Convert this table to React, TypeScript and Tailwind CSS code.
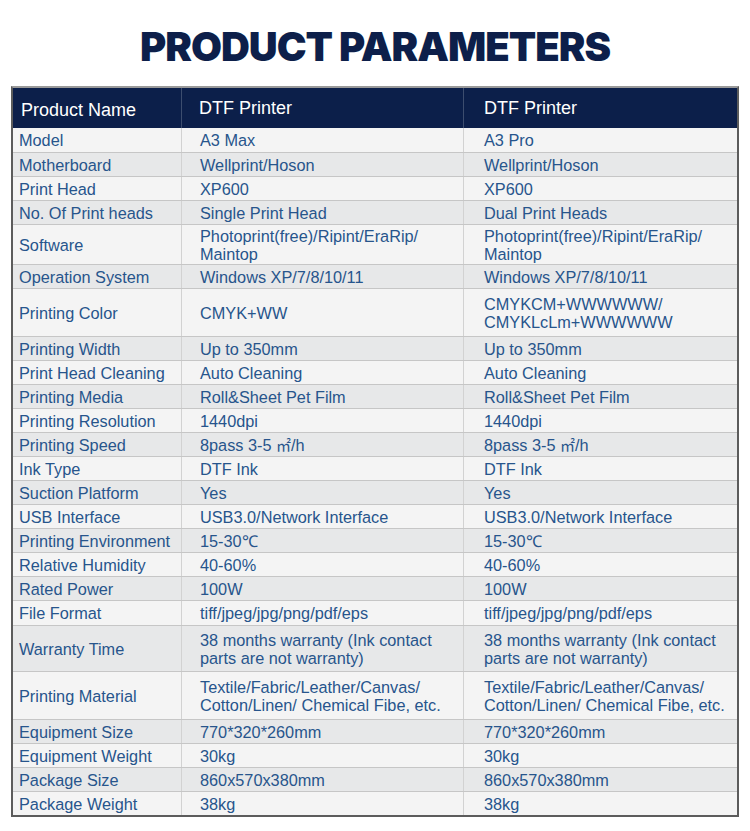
type Row = {
  label: string;
  a: string[];
  b: string[];
  h: number;
};

const rows: Row[] = [
  { label: "Model", a: ["A3 Max"], b: ["A3 Pro"], h: 24 },
  { label: "Motherboard", a: ["Wellprint/Hoson"], b: ["Wellprint/Hoson"], h: 24 },
  { label: "Print Head", a: ["XP600"], b: ["XP600"], h: 24 },
  { label: "No. Of Print heads", a: ["Single Print Head"], b: ["Dual Print Heads"], h: 24 },
  {
    label: "Software",
    a: ["Photoprint(free)/Ripint/EraRip/", "Maintop"],
    b: ["Photoprint(free)/Ripint/EraRip/", "Maintop"],
    h: 40,
  },
  { label: "Operation System", a: ["Windows XP/7/8/10/11"], b: ["Windows XP/7/8/10/11"], h: 24 },
  {
    label: "Printing Color",
    a: ["CMYK+WW"],
    b: ["CMYKCM+WWWWWW/", "CMYKLcLm+WWWWWW"],
    h: 48,
  },
  { label: "Printing Width", a: ["Up to 350mm"], b: ["Up to 350mm"], h: 24 },
  { label: "Print Head Cleaning", a: ["Auto Cleaning"], b: ["Auto Cleaning"], h: 24 },
  { label: "Printing Media", a: ["Roll&Sheet Pet Film"], b: ["Roll&Sheet Pet Film"], h: 24 },
  { label: "Printing Resolution", a: ["1440dpi"], b: ["1440dpi"], h: 24 },
  { label: "Printing Speed", a: ["8pass 3-5 ㎡/h"], b: ["8pass 3-5 ㎡/h"], h: 24 },
  { label: "Ink Type", a: ["DTF Ink"], b: ["DTF Ink"], h: 24 },
  { label: "Suction Platform", a: ["Yes"], b: ["Yes"], h: 24 },
  { label: "USB Interface", a: ["USB3.0/Network Interface"], b: ["USB3.0/Network Interface"], h: 24 },
  { label: "Printing Environment", a: ["15-30℃"], b: ["15-30℃"], h: 24 },
  { label: "Relative Humidity", a: ["40-60%"], b: ["40-60%"], h: 24 },
  { label: "Rated Power", a: ["100W"], b: ["100W"], h: 24 },
  { label: "File Format", a: ["tiff/jpeg/jpg/png/pdf/eps"], b: ["tiff/jpeg/jpg/png/pdf/eps"], h: 25 },
  {
    label: "Warranty Time",
    a: ["38 months warranty (Ink contact", "parts are not warranty)"],
    b: ["38 months warranty (Ink contact", "parts are not warranty)"],
    h: 46,
  },
  {
    label: "Printing Material",
    a: ["Textile/Fabric/Leather/Canvas/", "Cotton/Linen/ Chemical Fibe, etc."],
    b: ["Textile/Fabric/Leather/Canvas/", "Cotton/Linen/ Chemical Fibe, etc."],
    h: 48,
  },
  { label: "Equipment Size", a: ["770*320*260mm"], b: ["770*320*260mm"], h: 24 },
  { label: "Equipment Weight", a: ["30kg"], b: ["30kg"], h: 24 },
  { label: "Package Size", a: ["860x570x380mm"], b: ["860x570x380mm"], h: 24 },
  { label: "Package Weight", a: ["38kg"], b: ["38kg"], h: 24 },
];

// the ㎡ sign is tiny in Liberation Sans, so take it from the CJK font
function Text({ s }: { s: string }) {
  if (!s.includes("㎡")) return <>{s}</>;
  const [pre, post] = s.split("㎡");
  return (
    <>
      {pre}
      <span className="font-['Noto_Sans_CJK_SC',sans-serif] text-[15px]">㎡</span>
      {post}
    </>
  );
}

function Cell({ lines, className }: { lines: string[]; className: string }) {
  return (
    <div className={"flex flex-col justify-center " + className}>
      {lines.map((l) => (
        <div key={l} className={lines.length > 1 ? "leading-[18px]" : "leading-[20px]"}>
          <Text s={l} />
        </div>
      ))}
    </div>
  );
}

export default function App() {
  return (
    <main className="w-[750px] h-[831px] bg-white font-['Liberation_Sans',Arial,sans-serif]">
      <h1 className="pt-[25px] h-[86px] text-center text-[40px] leading-[44px] font-black tracking-[-1px] text-[#0d1f4a] font-['Inter',sans-serif]">
        PRODUCT PARAMETERS
      </h1>

      <div className="ml-[11px] w-[728px] border-2 border-[#5c5c5c] border-t-[#9a9a9a]">
        <div className="grid grid-cols-[168px_282px_1fr] h-[40px] bg-[#0c1f4a] text-white text-[18px]">
          <div className="flex items-center pl-[8px] pt-[4px]">Product Name</div>
          <div className="flex items-center pl-[17px] border-l border-[#3d4d6e]">DTF Printer</div>
          <div className="flex items-center pl-[20px] border-l border-[#3d4d6e]">DTF Printer</div>
        </div>

        {rows.map((row, i) => (
          <div
            key={row.label}
            style={{ height: row.h }}
            className={
              "grid grid-cols-[168px_282px_1fr] text-[16.3px] text-[#27558c] " +
              (i > 0 ? "border-t border-[#c6c6c6] " : "") +
              (i % 2 === 0 ? "bg-[#f4f4f4]" : "bg-[#e7e8e9]")
            }
          >
            <Cell lines={[row.label]} className="pl-[6px]" />
            <Cell lines={row.a} className="pl-[18px] border-l border-[#d2d2d2]" />
            <Cell lines={row.b} className="pl-[20px] border-l border-[#d2d2d2]" />
          </div>
        ))}
      </div>
    </main>
  );
}
